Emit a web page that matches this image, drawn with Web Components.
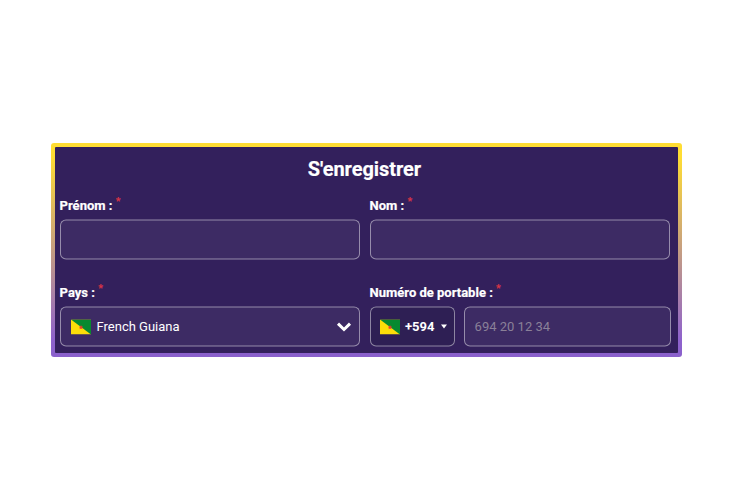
<!DOCTYPE html>
<html lang="fr">
<head>
<meta charset="utf-8">
<title>S'enregistrer</title>
<style>
html,body{margin:0;height:100%;background:#fff}
body{display:flex;align-items:center;justify-content:center;font-family:Roboto,"Liberation Sans",sans-serif;height:500px}
reg-card{margin-right:1px}
</style>
</head>
<body>
<template id="flag-tpl">
<style>:host{display:block;width:20px;height:15px;flex:none}svg{display:block;width:100%;height:100%}</style>
<svg viewBox="0 0 20 15" preserveAspectRatio="none" aria-hidden="true">
<rect width="20" height="15" fill="#fcdd09"/>
<path d="M0 0H20V15Z" fill="#078930"/>
<path d="M10 5.6 10.7 7 12.2 7.2 11.1 8.2 11.4 9.7 10 9 8.6 9.7 8.9 8.2 7.8 7.2 9.3 7Z" fill="#ef3b2d"/>
</svg>
</template>

<reg-card>
  <form-row>
    <form-field label="Prénom :"><text-box></text-box></form-field>
    <form-field label="Nom :"><text-box></text-box></form-field>
  </form-row>
  <form-row>
    <form-field label="Pays :"><country-select name="French Guiana"></country-select></form-field>
    <form-field label="Numéro de portable :"><phone-box code="+594" placeholder="694 20 12 34"></phone-box></form-field>
  </form-row>
</reg-card>

<script>
const shadow=(el,html)=>{el.attachShadow({mode:'open'}).innerHTML=html;return el.shadowRoot};
const boxCss=`box-sizing:border-box;height:40px;border:1px solid rgba(255,255,255,.46);border-radius:6px;background:rgba(255,255,255,.05);`;

customElements.define('flag-gf',class extends HTMLElement{
  connectedCallback(){if(this.shadowRoot)return;this.attachShadow({mode:'open'}).appendChild(document.getElementById('flag-tpl').content.cloneNode(true))}
});

customElements.define('reg-card',class extends HTMLElement{
  connectedCallback(){if(this.shadowRoot)return;shadow(this,`<style>
    :host{display:block;box-sizing:border-box;width:631px;height:214px;padding:4px;border-radius:3px;background:linear-gradient(180deg,#ffdd33 0%,#ffdd33 6%,#8e62cc 92%,#8a60cc 100%)}
    .in{box-sizing:border-box;height:100%;background:#33205c;padding:7px 11px 0 5px;display:flex;flex-direction:column;border-radius:1px}
    h1{margin:0 0 10px;font:700 20px/30px Roboto,sans-serif;color:#fff;text-align:center;padding-left:2px;letter-spacing:-.05px;-webkit-text-stroke:.15px #fff}
    .rows{display:flex;flex-direction:column;gap:21px;transform:translateY(-.5px)}
  </style><div class="in"><h1>S'enregistrer</h1><div class="rows"><slot></slot></div></div>`)}
});

customElements.define('form-row',class extends HTMLElement{
  connectedCallback(){if(this.shadowRoot)return;shadow(this,`<style>
    :host{display:grid;grid-template-columns:300px 300px;column-gap:10px}
  </style><slot></slot>`)}
});

customElements.define('form-field',class extends HTMLElement{
  connectedCallback(){if(this.shadowRoot)return;shadow(this,`<style>
    :host{display:block;min-width:0}
    .l{display:block;box-sizing:border-box;height:26px;padding-top:3px;font:700 13px/17px Roboto,sans-serif;color:#fff;transform:translateX(-.4px);-webkit-text-stroke:.2px #fff}
    .s{color:#dc3545;font-size:11px;font-weight:400;position:relative;top:-5px;-webkit-text-stroke:.2px #dc3545}
  </style><span class="l"><span class="t"></span> <span class="s">*</span></span><slot></slot>`);
    this.shadowRoot.querySelector('.t').textContent=this.getAttribute('label')}
});

customElements.define('text-box',class extends HTMLElement{
  connectedCallback(){if(this.shadowRoot)return;shadow(this,`<style>
    :host{display:block;${boxCss}}
  </style>`)}
});

customElements.define('country-select',class extends HTMLElement{
  connectedCallback(){if(this.shadowRoot)return;shadow(this,`<style>
    :host{display:flex;align-items:center;${boxCss}padding:0 7px 0 10px;color:#fff;font:400 13px Roboto,sans-serif}
    flag-gf{margin-right:5.5px}
    .n{flex:1;transform:translateY(-.5px)}
    svg{display:block;width:16px;height:12px}
  </style><flag-gf></flag-gf><span class="n"></span>
  <svg viewBox="0 0 16 12" aria-hidden="true"><path d="M2 3.2 8 9 14 3.2" fill="none" stroke="#fff" stroke-width="3"/></svg>`);
    this.shadowRoot.querySelector('.n').textContent=this.getAttribute('name')}
});

customElements.define('phone-box',class extends HTMLElement{
  connectedCallback(){if(this.shadowRoot)return;shadow(this,`<style>
    :host{display:grid;grid-template-columns:85px 207px;column-gap:9px;width:301px}
    .code{${boxCss}background:#2e1f54;display:flex;align-items:center;padding-left:9px;color:#fff;font:700 13px Roboto,sans-serif}
    .c{margin-left:5px;transform:translateY(-.5px)}
    .car{margin-left:7px;width:0;height:0;border:3.5px solid transparent;border-top:4px solid #fff;border-bottom:0}
    .num{${boxCss}display:flex;align-items:center;padding-left:10px;color:#8a8098;font:400 13px Roboto,sans-serif}
    .num span{transform:translate(-.4px,-.5px)}
  </style><div class="code"><flag-gf></flag-gf><span class="c"></span><span class="car"></span></div><div class="num"><span class="p"></span></div>`);
    this.shadowRoot.querySelector('.c').textContent=this.getAttribute('code');
    this.shadowRoot.querySelector('.p').textContent=this.getAttribute('placeholder')}
});
</script>
</body>
</html>
